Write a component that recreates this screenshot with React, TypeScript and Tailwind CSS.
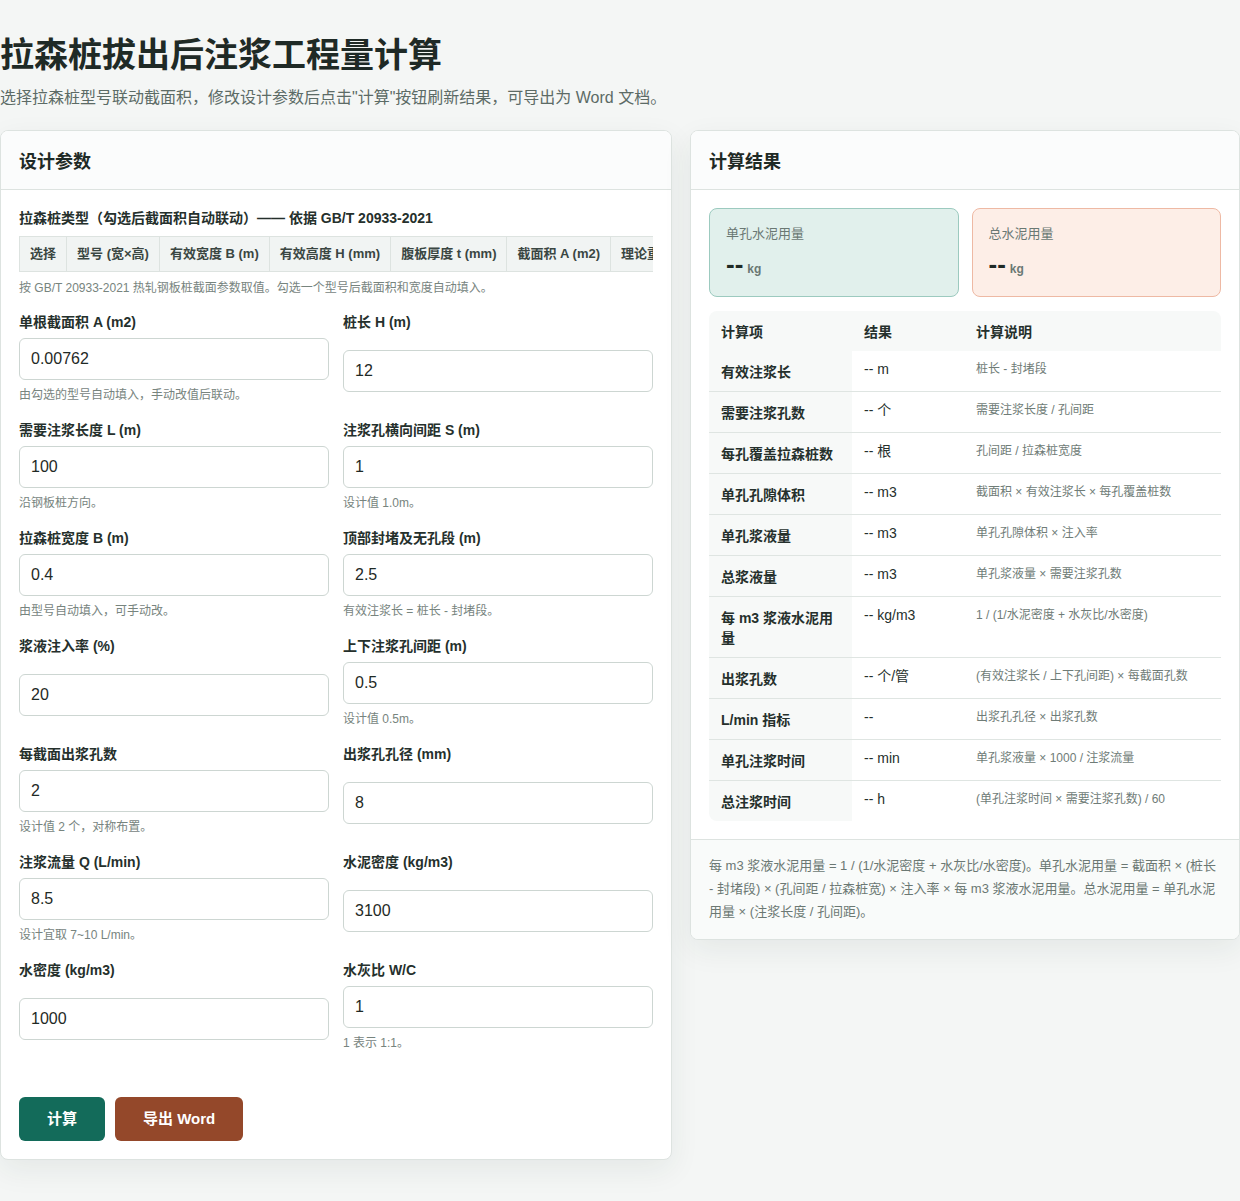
import React from "react";

const FONT = { fontFamily: '"Liberation Sans", "Noto Sans CJK SC", sans-serif' };

type Field = { label: string; value: string; hint?: string };

const rows: [Field, Field][] = [
  [
    { label: "单根截面积 A (m2)", value: "0.00762", hint: "由勾选的型号自动填入，手动改值后联动。" },
    { label: "桩长 H (m)", value: "12" },
  ],
  [
    { label: "需要注浆长度 L (m)", value: "100", hint: "沿钢板桩方向。" },
    { label: "注浆孔横向间距 S (m)", value: "1", hint: "设计值 1.0m。" },
  ],
  [
    { label: "拉森桩宽度 B (m)", value: "0.4", hint: "由型号自动填入，可手动改。" },
    { label: "顶部封堵及无孔段 (m)", value: "2.5", hint: "有效注浆长 = 桩长 - 封堵段。" },
  ],
  [
    { label: "浆液注入率 (%)", value: "20" },
    { label: "上下注浆孔间距 (m)", value: "0.5", hint: "设计值 0.5m。" },
  ],
  [
    { label: "每截面出浆孔数", value: "2", hint: "设计值 2 个，对称布置。" },
    { label: "出浆孔孔径 (mm)", value: "8" },
  ],
  [
    { label: "注浆流量 Q (L/min)", value: "8.5", hint: "设计宜取 7~10 L/min。" },
    { label: "水泥密度 (kg/m3)", value: "3100" },
  ],
  [
    { label: "水密度 (kg/m3)", value: "1000" },
    { label: "水灰比 W/C", value: "1", hint: "1 表示 1:1。" },
  ],
];

const tableHead = [
  "选择",
  "型号 (宽×高)",
  "有效宽度 B (m)",
  "有效高度 H (mm)",
  "腹板厚度 t (mm)",
  "截面积 A (m2)",
  "理论重量 (kg/m)",
];

const results: { item: string; value: string; desc: string }[] = [
  { item: "有效注浆长", value: "-- m", desc: "桩长 - 封堵段" },
  { item: "需要注浆孔数", value: "-- 个", desc: "需要注浆长度 / 孔间距" },
  { item: "每孔覆盖拉森桩数", value: "-- 根", desc: "孔间距 / 拉森桩宽度" },
  { item: "单孔孔隙体积", value: "-- m3", desc: "截面积 × 有效注浆长 × 每孔覆盖桩数" },
  { item: "单孔浆液量", value: "-- m3", desc: "单孔孔隙体积 × 注入率" },
  { item: "总浆液量", value: "-- m3", desc: "单孔浆液量 × 需要注浆孔数" },
  { item: "每 m3 浆液水泥用量", value: "-- kg/m3", desc: "1 / (1/水泥密度 + 水灰比/水密度)" },
  { item: "出浆孔数", value: "-- 个/管", desc: "(有效注浆长 / 上下孔间距) × 每截面孔数" },
  { item: "L/min 指标", value: "--", desc: "出浆孔孔径 × 出浆孔数" },
  { item: "单孔注浆时间", value: "-- min", desc: "单孔浆液量 × 1000 / 注浆流量" },
  { item: "总注浆时间", value: "-- h", desc: "(单孔注浆时间 × 需要注浆孔数) / 60" },
];

function FieldBox({ f }: { f: Field }) {
  return (
    <div className="grid gap-1.5">
      <label className="text-[14px] leading-5 font-bold text-[#25302c]">{f.label}</label>
      <input
        readOnly
        value={f.value}
        className="h-[42px] w-full rounded-[6px] border border-[#cdd6d2] bg-white px-[11px] text-[16px] text-[#1f2a26] outline-none"
        style={FONT}
      />
      {f.hint && <div className="text-[12px] leading-[18px] text-[#77847e]">{f.hint}</div>}
    </div>
  );
}

export default function App() {
  return (
    <div className="min-h-[1201px] bg-[#f4f6f5] pt-[34px] pb-10 text-[#1f2a26]" style={FONT}>
      <h1 className="text-[34px] leading-[42px] font-bold text-[#1f2a26]">拉森桩拔出后注浆工程量计算</h1>
      <p className="mt-[10px] text-[16px] leading-6 text-[#5c6b66]">
        选择拉森桩型号联动截面积，修改设计参数后点击"计算"按钮刷新结果，可导出为 Word 文档。
      </p>

      <div className="mt-5 grid grid-cols-[672px_1fr] items-start gap-[18px]">
        {/* Left card */}
        <div className="overflow-hidden rounded-[8px] border border-[#dde3e0] bg-white shadow-[0_10px_30px_rgba(30,50,40,0.07)]">
          <div className="border-b border-[#dde3e0] bg-[#fbfcfc] px-[18px] pt-5 pb-4 text-[18px] leading-[22px] font-bold text-[#1f2a26]">
            设计参数
          </div>
          <div className="p-[18px]">
            <div className="text-[14px] leading-5 font-bold text-[#25302c]">
              拉森桩类型（勾选后截面积自动联动）—— 依据 GB/T 20933-2021
            </div>
            <div className="mt-2 overflow-hidden">
              <table className="border-collapse">
                <thead>
                  <tr>
                    {tableHead.map((h) => (
                      <th
                        key={h}
                        className="h-[35px] whitespace-nowrap border border-[#dde3e0] bg-[#f1f4f3] px-[10px] text-left text-[13px] font-bold text-[#3a4642]"
                      >
                        {h}
                      </th>
                    ))}
                  </tr>
                </thead>
              </table>
            </div>
            <div className="mt-[7px] text-[12px] leading-[18px] text-[#77847e]">
              按 GB/T 20933-2021 热轧钢板桩截面参数取值。勾选一个型号后截面积和宽度自动填入。
            </div>

            <div className="mt-[15px] grid grid-cols-2 gap-x-[14px] gap-y-4">
              {rows.map(([a, b], i) => (
                <React.Fragment key={i}>
                  <FieldBox f={a} />
                  <FieldBox f={b} />
                </React.Fragment>
              ))}
            </div>

            <div className="mt-[45px] flex gap-[10px]">
              <button className="h-[44px] rounded-[6px] bg-[#136b5a] px-7 text-[15px] font-bold text-white">计算</button>
              <button className="h-[44px] rounded-[6px] bg-[#94482a] px-7 text-[15px] font-bold text-white">导出 Word</button>
            </div>
          </div>
        </div>

        {/* Right card */}
        <div className="overflow-hidden rounded-[8px] border border-[#dde3e0] bg-white shadow-[0_10px_30px_rgba(30,50,40,0.07)]">
          <div className="border-b border-[#dde3e0] bg-[#fbfcfc] px-[18px] pt-5 pb-4 text-[18px] leading-[22px] font-bold text-[#1f2a26]">
            计算结果
          </div>
          <div className="p-[18px]">
            <div className="grid grid-cols-2 gap-[13px]">
              <div className="h-[89px] rounded-[8px] border border-[#9ccabf] bg-[#e1f0ec] px-4 pt-[15px]">
                <div className="text-[13px] leading-5 text-[#6a7873]">单孔水泥用量</div>
                <div className="mt-[6px] flex items-baseline gap-1 leading-7">
                  <span className="text-[26px] font-bold text-[#1f2a26]">--</span>
                  <span className="text-[12px] font-bold text-[#6a7873]">kg</span>
                </div>
              </div>
              <div className="h-[89px] rounded-[8px] border border-[#eeb9a4] bg-[#fdeee7] px-4 pt-[15px]">
                <div className="text-[13px] leading-5 text-[#6a7873]">总水泥用量</div>
                <div className="mt-[6px] flex items-baseline gap-1 leading-7">
                  <span className="text-[26px] font-bold text-[#1f2a26]">--</span>
                  <span className="text-[12px] font-bold text-[#6a7873]">kg</span>
                </div>
              </div>
            </div>

            <div className="mt-[14px] overflow-hidden rounded-[8px]">
              <table className="w-full table-fixed border-collapse">
                <colgroup>
                  <col className="w-[143px]" />
                  <col className="w-[112px]" />
                  <col />
                </colgroup>
                <thead>
                  <tr className="bg-[#f7f9f8]">
                    <th className="px-3 pt-[11px] pb-[9px] text-left text-[14px] leading-5 font-bold text-[#25302c]">计算项</th>
                    <th className="px-3 pt-[11px] pb-[9px] text-left text-[14px] leading-5 font-bold text-[#25302c]">结果</th>
                    <th className="px-3 pt-[11px] pb-[9px] text-left text-[14px] leading-5 font-bold text-[#25302c]">计算说明</th>
                  </tr>
                </thead>
                <tbody>
                  {results.map((r, i) => (
                    <tr key={r.item} className={i < results.length - 1 ? "border-b border-[#dfe5e2]" : ""}>
                      <th className="bg-[#f7f9f8] px-3 pt-[11px] pb-[9px] text-left align-middle text-[14px] leading-5 font-bold text-[#25302c]">
                        {r.item}
                      </th>
                      <td className="px-3 pt-2 pb-3 align-top text-[14px] leading-5 text-[#25302c]">{r.value}</td>
                      <td className="px-3 pt-2 pb-3 align-top text-[12px] leading-5 text-[#6f7c77]">{r.desc}</td>
                    </tr>
                  ))}
                </tbody>
              </table>
            </div>
          </div>
          <div className="border-t border-[#dde3e0] bg-[#f9fbfa] px-[18px] pt-[14px] pb-[16px] text-[13px] leading-[23px] text-[#6b7873]">
            每 m3 浆液水泥用量 = 1 / (1/水泥密度 + 水灰比/水密度)。单孔水泥用量 = 截面积 × (桩长 - 封堵段) × (孔间距 / 拉森桩宽) × 注入率 × 每 m3 浆液水泥用量。总水泥用量 = 单孔水泥用量 × (注浆长度 / 孔间距)。
          </div>
        </div>
      </div>
    </div>
  );
}
